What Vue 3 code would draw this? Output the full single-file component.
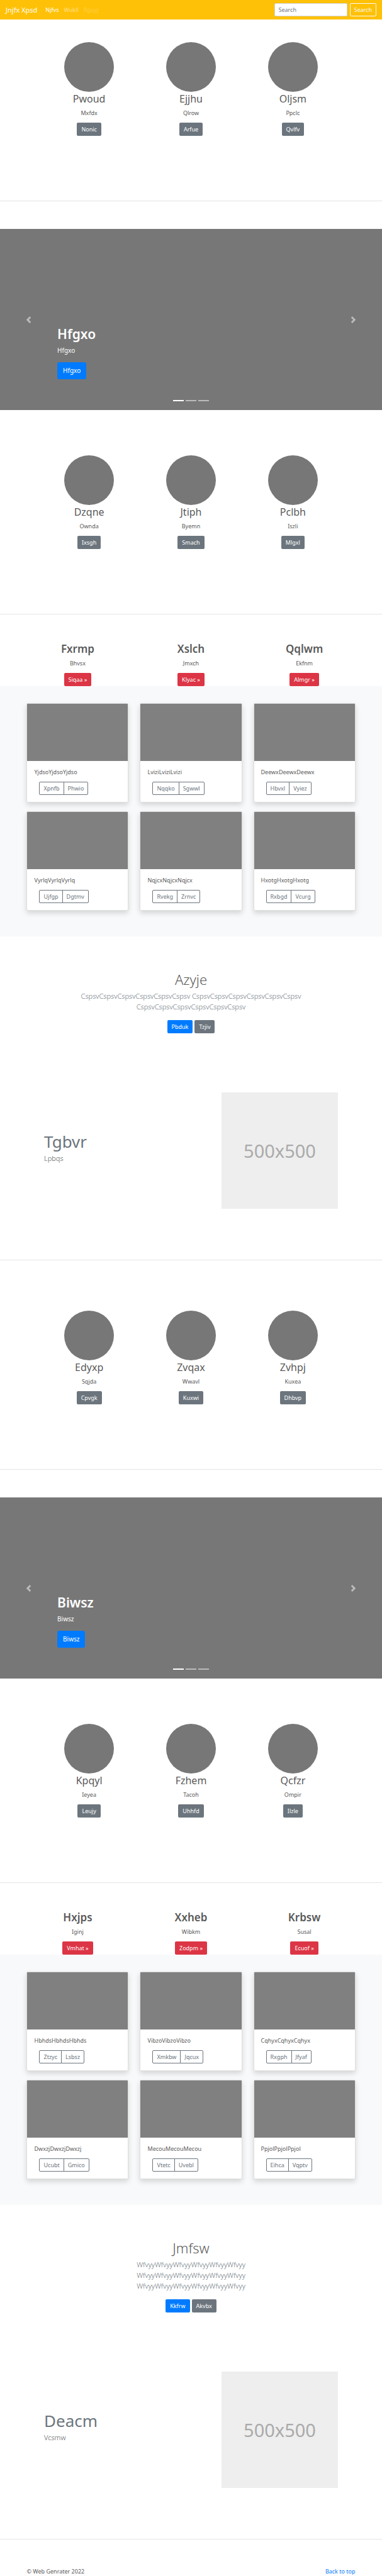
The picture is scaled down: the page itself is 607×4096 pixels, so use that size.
<script setup>
const people = (rows) => rows.map(([name, text, action]) => ({ name, text, action }))
const albums = (rows) => rows.map(([text, first, second]) => ({ text, first, second }))

const groups = [
  {
    intro: people([['Pwoud', 'Mxfdx', 'Nonic'], ['Ejjhu', 'Qlrow', 'Arfue'], ['Oljsm', 'Ppclc', 'Qvlfv']]),
    slide: 'Hfgxo',
    team: people([['Dzqne', 'Ownda', 'Ixsgh'], ['Jtiph', 'Byemn', 'Smach'], ['Pclbh', 'Iszli', 'Mlgxl']]),
    topics: people([['Fxrmp', 'Bhvsx', 'Siqaa »'], ['Xslch', 'Jmxch', 'Klyac »'], ['Qqlwm', 'Ekfnm', 'Almgr »']]),
    cards: albums([
      ['YjdsoYjdsoYjdso', 'Xpnfb', 'Phwio'],
      ['LviziLviziLvizi', 'Nqqko', 'Sgwwl'],
      ['DeewxDeewxDeewx', 'Hbvxl', 'Vyiez'],
      ['VyrlqVyrlqVyrlq', 'Ujfgp', 'Dgtmv'],
      ['NqjcxNqjcxNqjcx', 'Rvekg', 'Zrnvc'],
      ['HxotgHxotgHxotg', 'Rxbgd', 'Vcurg'],
    ]),
    banner: {
      title: 'Azyje',
      lines: ['CspsvCspsvCspsvCspsvCspsvCspsv CspsvCspsvCspsvCspsvCspsvCspsv', 'CspsvCspsvCspsvCspsvCspsvCspsv'],
      primary: 'Pbduk',
      secondary: 'Tzjiv',
    },
    feature: { title: 'Tgbvr', text: 'Lpbqs' },
  },
  {
    intro: people([['Edyxp', 'Sqjda', 'Cpvgk'], ['Zvqax', 'Wwavl', 'Kuxwi'], ['Zvhpj', 'Kuxea', 'Dhbvp']]),
    slide: 'Biwsz',
    team: people([['Kpqyl', 'Ieyea', 'Leujy'], ['Fzhem', 'Tacoh', 'Uhhfd'], ['Qcfzr', 'Ompir', 'Ilzle']]),
    topics: people([['Hxjps', 'Iginj', 'Vmhat »'], ['Xxheb', 'Wibkm', 'Zodpm »'], ['Krbsw', 'Susal', 'Ecuof »']]),
    cards: albums([
      ['HbhdsHbhdsHbhds', 'Ztzyc', 'Lsbsz'],
      ['VibzoVibzoVibzo', 'Xmkbw', 'Jqcux'],
      ['CqhyxCqhyxCqhyx', 'Rxgph', 'Jfyaf'],
      ['DwxzjDwxzjDwxzj', 'Ucubt', 'Gmico'],
      ['MecouMecouMecou', 'Vtetc', 'Uvebl'],
      ['PpjolPpjolPpjol', 'Eihca', 'Vqptv'],
    ]),
    banner: {
      title: 'Jmfsw',
      lines: ['WfvyyWfvyyWfvyyWfvyyWfvyyWfvyy', 'WfvyyWfvyyWfvyyWfvyyWfvyyWfvyy', 'WfvyyWfvyyWfvyyWfvyyWfvyyWfvyy'],
      primary: 'Kkfrw',
      secondary: 'Akvbx',
    },
    feature: { title: 'Deacm', text: 'Vcsmw' },
  },
]
</script>

<template>
  <div id="top" class="page">
    <header class="navbar">
      <a class="brand" href="#top">Jnjfx Xpsd</a>
      <nav class="links">
        <a class="link active" href="#">Njfvs</a>
        <a class="link" href="#">Wukll</a>
        <a class="link disabled" href="#" aria-disabled="true">Rguyj</a>
      </nav>
      <form class="search" role="search" @submit.prevent>
        <input class="search-input" type="search" placeholder="Search" aria-label="Search" />
        <button class="btn outline-light" type="submit">Search</button>
      </form>
    </header>

    <main>
      <template v-for="group in groups" :key="group.slide">
        <section class="people">
          <article v-for="p in group.intro" :key="p.name" class="entry">
            <div class="avatar"></div>
            <h2>{{ p.name }}</h2>
            <p>{{ p.text }}</p>
            <a class="btn gray" href="#">{{ p.action }}</a>
          </article>
        </section>
        <hr />

        <section class="carousel">
          <h1>{{ group.slide }}</h1>
          <p>{{ group.slide }}</p>
          <a class="btn blue large" href="#">{{ group.slide }}</a>
          <button class="arrow prev" type="button" aria-label="Previous">
            <svg viewBox="0 0 8 8"><path d="M5.25 0l-4 4 4 4 1.5-1.5-2.5-2.5 2.5-2.5-1.5-1.5z" /></svg>
          </button>
          <button class="arrow next" type="button" aria-label="Next">
            <svg viewBox="0 0 8 8"><path d="M2.75 0l-1.5 1.5 2.5 2.5-2.5 2.5 1.5 1.5 4-4-4-4z" /></svg>
          </button>
          <div class="indicators">
            <button v-for="n in 3" :key="n" type="button" :class="{ current: n === 1 }" :aria-label="`Slide ${n}`"></button>
          </div>
        </section>

        <section class="people">
          <article v-for="p in group.team" :key="p.name" class="entry">
            <div class="avatar"></div>
            <h2>{{ p.name }}</h2>
            <p>{{ p.text }}</p>
            <a class="btn gray" href="#">{{ p.action }}</a>
          </article>
        </section>
        <hr />

        <section class="topics">
          <article v-for="p in group.topics" :key="p.name" class="entry">
            <h2>{{ p.name }}</h2>
            <p>{{ p.text }}</p>
            <a class="btn red" href="#">{{ p.action }}</a>
          </article>
        </section>

        <section class="album">
          <div class="cards">
            <article v-for="card in group.cards" :key="card.text" class="card">
              <div class="thumb"></div>
              <div class="card-body">
                <p>{{ card.text }}</p>
                <div class="btn-group">
                  <button type="button">{{ card.first }}</button>
                  <button type="button">{{ card.second }}</button>
                </div>
              </div>
            </article>
          </div>
        </section>

        <section class="banner">
          <h2>{{ group.banner.title }}</h2>
          <p><span v-for="(line, i) in group.banner.lines" :key="i">{{ line }}</span></p>
          <div class="actions">
            <a class="btn blue" href="#">{{ group.banner.primary }}</a>
            <a class="btn gray" href="#">{{ group.banner.secondary }}</a>
          </div>
        </section>

        <section class="feature">
          <div class="feature-text">
            <h2>{{ group.feature.title }}</h2>
            <p>{{ group.feature.text }}</p>
          </div>
          <div class="placeholder">500x500</div>
        </section>
        <hr />
      </template>
    </main>

    <footer class="footer">
      <span>© Web Genrater 2022</span>
      <a href="#top">Back to top</a>
    </footer>
  </div>
</template>

<style>
body {
  margin: 0;
  background: #fff;
}
</style>

<style scoped>
.page {
  font-family: "Noto Sans", "Open Sans", sans-serif;
  font-size: 9px;
  line-height: 13px;
  color: #5a5a5a;
}
* {
  box-sizing: border-box;
}
h1,
h2,
p {
  margin: 0;
}
a {
  text-decoration: none;
}
button,
input {
  margin: 0;
  font: inherit;
}
hr {
  height: 1px;
  margin: 44px 0;
  border: 0;
  background: #e5e5e5;
}

.btn {
  display: inline-flex;
  align-items: center;
  height: 21px;
  padding: 0 7px;
  border: 0;
  border-radius: 2px;
  color: #fff;
}
.btn.large {
  height: 27px;
  padding: 0 9px;
  border-radius: 3px;
  font-size: 10px;
}
.gray {
  background: #6c757d;
}
.blue {
  background: #007bff;
}
.red {
  background: #dc3545;
}
.btn.outline-light {
  padding: 0 6px;
  border: 1px solid #f8f9fa;
  background: transparent;
  color: #f8f9fa;
}

.navbar {
  display: flex;
  align-items: center;
  height: 31px;
  padding: 0 9px;
  background: #ffc107;
}
.brand {
  font-size: 11px;
  color: #fff;
}
.links {
  display: flex;
  gap: 8px;
  margin-left: 13px;
}
.link {
  color: rgba(255, 255, 255, 0.5);
}
.link.active {
  color: #fff;
}
.link.disabled {
  color: rgba(255, 255, 255, 0.25);
}
.search {
  display: flex;
  gap: 4px;
  margin-left: auto;
}
.search-input {
  width: 116px;
  height: 21px;
  padding: 0 6px;
  border: 1px solid #ced4da;
  border-radius: 2px;
  background: #fff;
  color: #495057;
  appearance: none;
}
.search-input::placeholder {
  color: #6c757d;
  opacity: 1;
}

.people {
  display: grid;
  grid-template-columns: repeat(3, 1fr);
  padding: 36px 10% 59px;
}
.entry {
  display: flex;
  flex-direction: column;
  align-items: center;
}
.avatar {
  width: 79px;
  height: 79px;
  border-radius: 50%;
  background: #777;
}
.entry h2 {
  margin-bottom: 5px;
  font-size: 16px;
  line-height: 22px;
  font-weight: 400;
}
.entry p {
  margin-bottom: 9px;
}

.carousel {
  position: relative;
  display: flex;
  flex-direction: column;
  justify-content: flex-end;
  align-items: flex-start;
  min-height: 288px;
  margin-bottom: 36px;
  padding: 0 15% 49px;
  background: #777;
  color: #fff;
}
.carousel h1 {
  margin-bottom: 4px;
  font-size: 21px;
  line-height: 27px;
  font-weight: 600;
}
.carousel p {
  margin-bottom: 10px;
  font-size: 10px;
  line-height: 17px;
}
.arrow {
  position: absolute;
  top: 0;
  bottom: 0;
  display: flex;
  align-items: center;
  justify-content: center;
  width: 15%;
  padding: 0;
  border: 0;
  background: transparent;
  opacity: 0.5;
}
.arrow svg {
  width: 11px;
  height: 11px;
  fill: #fff;
}
.prev {
  left: 0;
}
.next {
  right: 0;
}
.indicators {
  position: absolute;
  left: 0;
  right: 0;
  bottom: 14px;
  display: flex;
  justify-content: center;
  gap: 3px;
}
.indicators button {
  width: 17px;
  height: 2px;
  padding: 0;
  border: 0;
  background: #fff;
  opacity: 0.5;
}
.indicators .current {
  opacity: 1;
}

.topics {
  display: grid;
  grid-template-columns: repeat(3, 1fr);
  width: 89%;
  margin: 0 auto;
}
.topics h2 {
  font-size: 17px;
  font-weight: 600;
}

.album {
  padding: 27px 7% 41px;
  background: #f8f9fa;
}
.cards {
  display: grid;
  grid-template-columns: repeat(3, 1fr);
  gap: 14px 18px;
}
.card {
  border: 1px solid #dfdfdf;
  border-radius: 2px;
  background: #fff;
  box-shadow: 0 4px 9px rgba(0, 0, 0, 0.15);
}
.thumb {
  height: 91px;
  border-radius: 1px 1px 0 0;
  background: #808080;
}
.card-body {
  padding: 11px;
}
.card-body p {
  margin-bottom: 9px;
}
.btn-group {
  display: flex;
  margin-left: 8px;
}
.btn-group button {
  height: 21px;
  padding: 0 6px;
  border: 1px solid #6c757d;
  background: transparent;
  color: #6c757d;
}
.btn-group button:first-child {
  border-radius: 2px 0 0 2px;
}
.btn-group button:last-child {
  margin-left: -1px;
  border-radius: 0 2px 2px 0;
}

.banner {
  padding: 55px 0 94px;
  text-align: center;
}
.banner h2 {
  margin-bottom: 5px;
  font-size: 22px;
  line-height: 26px;
  font-weight: 300;
}
.banner p {
  margin-bottom: 13px;
  font-size: 11px;
  line-height: 17px;
  font-weight: 300;
  color: #6c757d;
}
.banner span {
  display: block;
}
.actions {
  display: flex;
  justify-content: center;
  gap: 3px;
}

.feature {
  display: flex;
  align-items: center;
  justify-content: space-between;
  padding: 0 70px 37px;
}
.feature-text {
  padding-bottom: 12px;
}
.feature h2 {
  font-size: 26px;
  line-height: 35px;
  font-weight: 400;
  color: #6c757d;
}
.feature p {
  font-size: 11px;
  line-height: 17px;
  font-weight: 300;
}
.placeholder {
  display: flex;
  align-items: center;
  justify-content: center;
  width: 185px;
  height: 185px;
  background: #eee;
  color: #aaa;
  font-size: 29px;
  line-height: 35px;
}

.footer {
  display: flex;
  justify-content: space-between;
  padding: 0 7%;
  line-height: 14px;
}
.footer a {
  color: #007bff;
}
</style>
